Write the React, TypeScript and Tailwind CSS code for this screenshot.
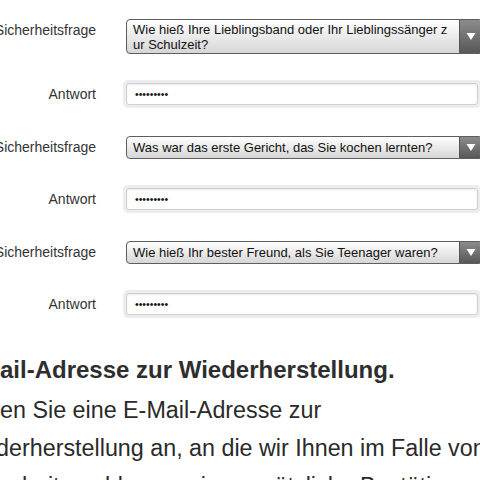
import React from "react";

const font = { fontFamily: '"Liberation Sans", Arial, Helvetica, sans-serif' };

function Arrow() {
  return (
    <div className="flex w-[23px] shrink-0 items-center justify-center self-stretch bg-gradient-to-b from-[#8c8c8c] to-[#585858] border-l border-[#555]">
      <svg width="10" height="9" viewBox="0 0 10 9">
        <path d="M0.5 1 L9.5 1 L5 8 Z" fill="#ffffff" />
      </svg>
    </div>
  );
}

function QuestionSelect({ lines, tall }: { lines: string[]; tall?: boolean }) {
  return (
    <div
      className={`flex w-[357px] overflow-hidden rounded-[4px] border border-[#5e5e5e] bg-gradient-to-b from-[#ffffff] to-[#d6d6d6] ${
        tall ? "h-[35px]" : "h-[23px]"
      }`}
    >
      <div className="flex flex-1 flex-col justify-center pl-[6px] text-[13px] leading-[15px] text-[#111]">
        {lines.map((l) => (
          <span key={l} className="block whitespace-nowrap">
            {l}
          </span>
        ))}
      </div>
      <Arrow />
    </div>
  );
}

function AnswerField() {
  return (
    <div className="-ml-[3px] w-[358px] rounded-[5px] bg-[#ededed] p-[3px]">
      <div className="flex h-[22px] items-center rounded-[3px] border border-[#cfcfcf] bg-white pl-[8px] shadow-[inset_0_1px_2px_rgba(0,0,0,0.08)]">
        <span className="text-[10.5px] leading-none text-[#111]">•••••••••</span>
      </div>
    </div>
  );
}

function Label({ children }: { children: React.ReactNode }) {
  return (
    <div className="w-[140px] shrink-0 text-right text-[14px] leading-[16px] text-[#333]">
      {children}
    </div>
  );
}

const questions = [
  { lines: ["Wie hieß Ihre Lieblingsband oder Ihr Lieblingssänger z", "ur Schulzeit?"], tall: true },
  { lines: ["Was war das erste Gericht, das Sie kochen lernten?"] },
  { lines: ["Wie hieß Ihr bester Freund, als Sie Teenager waren?"] },
];

export default function App() {
  return (
    <div className="h-[480px] w-[480px] overflow-hidden bg-white" style={font}>
      <div className="-ml-[44px] w-[620px] pt-[19px]">
        <div className="flex flex-col">
          {questions.map((q, i) => (
            <div key={i} className={i === 0 ? "" : "mt-[28px]"}>
              <div className="flex items-start gap-[30px]">
                <div className="pt-[3px]">
                  <Label>Sicherheitsfrage</Label>
                </div>
                <QuestionSelect lines={q.lines} tall={q.tall} />
              </div>
              <div className="mt-[26px] flex items-center gap-[30px]">
                <Label>Antwort</Label>
                <AnswerField />
              </div>
            </div>
          ))}
        </div>

        <h2 className="mt-[38px] whitespace-nowrap text-[24px] font-bold leading-[28px] text-[#2e2e2e]">
          E-Mail-Adresse zur Wiederherstellung.
        </h2>
        <p className="mt-[7px] text-[23.3px] leading-[38px] text-[#2a2a2a]">
          <span className="block whitespace-nowrap">Geben Sie eine E-Mail-Adresse zur</span>
          <span className="block whitespace-nowrap">Wiederherstellung an, an die wir Ihnen im Falle von</span>
          <span className="block whitespace-nowrap">Sicherheitsproblemen eine zusätzliche Bestätigung</span>
        </p>
      </div>
    </div>
  );
}
